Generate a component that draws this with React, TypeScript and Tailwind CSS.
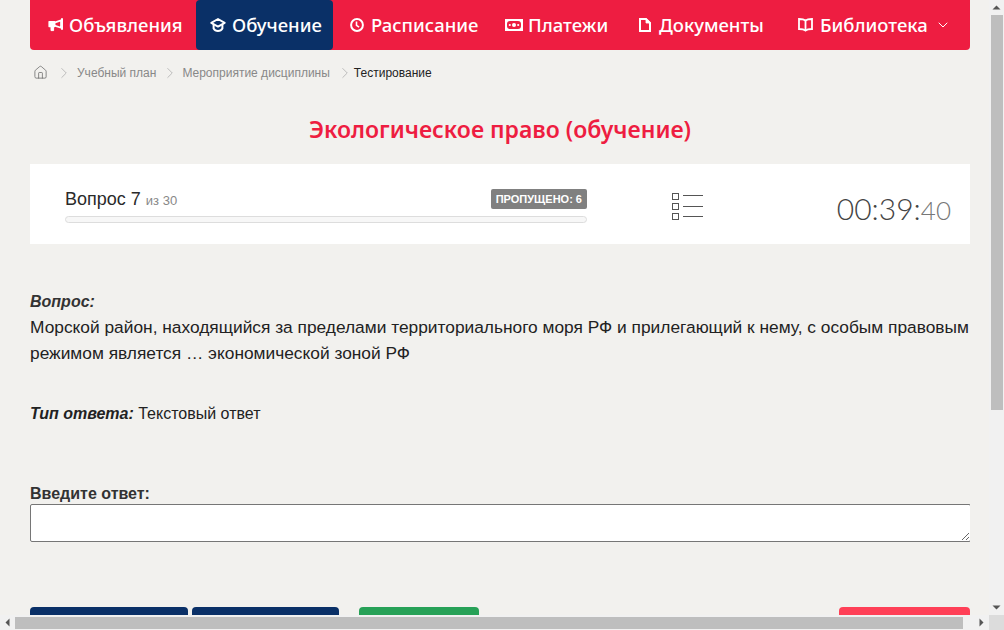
import { ChevronDown, ChevronRight, Home } from "lucide-react";

const navFont = "[font-family:'Noto_Sans',sans-serif]";

const MegaphoneIcon = () => (
  <svg width="15" height="14" viewBox="0 0 15 14" className="shrink-0" fill="none" stroke="#fff">
    <path d="M14 1v10" strokeWidth="2" strokeLinecap="round" />
    <path d="M13 2.400 6.500 4.600v3l6.500 2.200z" strokeWidth="1.700" strokeLinejoin="round" />
    <path d="M1 3.600h5.600v5H1z" fill="#fff" strokeWidth="1.200" strokeLinejoin="round" />
    <path d="M3 9v3.600h2.600V9" fill="#fff" strokeWidth="1" />
  </svg>
);

const CapIcon = ({ fill }: { fill: string }) => (
  <svg width="16" height="14" viewBox="0 0 16 14" className="shrink-0" fill="none" stroke="#fff">
    <path d="M3.600 6v4.600c1 1.800 2.700 2.400 4.400 2.400s3.400-.6 4.400-2.400V6" strokeWidth="2" />
    <path d="M8 1 14.700 4.800 8 8.600 1.300 4.800z" fill={fill} strokeWidth="1.900" strokeLinejoin="round" />
  </svg>
);

const ClockIcon = () => (
  <svg width="14" height="14" viewBox="0 0 14 14" className="shrink-0" fill="none" stroke="#fff">
    <circle cx="7" cy="7" r="5.900" strokeWidth="2" />
    <path d="M6.500 3.600v3.700l2.600 1.900" strokeWidth="1.600" />
  </svg>
);

const MoneyIcon = () => (
  <svg width="18" height="12" viewBox="0 0 18 12" className="shrink-0">
    <rect width="18" height="12" fill="#fff" />
    <rect x="2" y="2" width="14" height="8" rx="3" fill="#ee1d41" />
    <circle cx="9" cy="6" r="2" fill="#fff" />
    <circle cx="4.800" cy="6" r="1.100" fill="#fff" />
    <circle cx="13.200" cy="6" r="1.100" fill="#fff" />
  </svg>
);

const DocIcon = () => (
  <svg width="12" height="14" viewBox="0 0 12 14" className="shrink-0" fill="none" stroke="#fff">
    <path d="M1 1h6l4 4v8H1z" strokeWidth="2" />
    <path d="M7 0.500v4.500h4.500z" fill="#fff" strokeWidth="0.800" />
  </svg>
);

const BookIcon = () => (
  <svg width="15" height="14" viewBox="0 0 15 14" className="shrink-0" fill="none" stroke="#fff">
    <path d="M7.500 2.500C6 1.300 3.500 1 1 1v10c2.500 0 5 .3 6.500 1.500C9 11.300 11.500 11 14 11V1c-2.500 0-5 .3-6.500 1.500z" strokeWidth="1.800" />
    <path d="M7.500 2v11" strokeWidth="1.800" />
  </svg>
);

const navItems = [
  { label: "Объявления", icon: <MegaphoneIcon />, className: "w-[166px] pl-[18px] gap-[6px]" },
  { label: "Обучение", icon: <CapIcon fill="#0a3067" />, className: "w-[137px] pl-[14px] gap-[6px] bg-[#0a3067] rounded-[4px]" },
  { label: "Расписание", icon: <ClockIcon />, className: "w-[155px] pl-[17px] gap-[7px]" },
  { label: "Платежи", icon: <MoneyIcon />, className: "w-[133px] pl-[17px] gap-[5px]" },
  { label: "Документы", icon: <DocIcon />, className: "w-[160px] pl-[18px] gap-[8px]" },
];

const Arrow = ({ d }: { d: string }) => (
  <svg width="15" height="15" viewBox="0 0 15 15" className="shrink-0">
    <path d={d} fill="#555" />
  </svg>
);

export default function App() {
  return (
    <div className="h-[630px] w-[1004px] overflow-hidden flex flex-col bg-[#f2f1ee] [font-family:'Liberation_Sans',sans-serif] text-[#222]">
      <div className="flex h-[615px]">
        <main className="w-[989px] h-[615px] overflow-hidden pl-[30px] pr-[19px]">
          {/* nav */}
          <nav className={`flex h-[50px] items-stretch bg-[#ee1d41] rounded-b-[4px] text-white text-[18.5px] font-medium ${navFont}`}>
            {navItems.map((item) => (
              <div key={item.label} className={`flex items-center ${item.className}`}>
                {item.icon}
                <span>{item.label}</span>
              </div>
            ))}
            <div className="flex items-center gap-[7px] pl-[17px]">
              <BookIcon />
              <span>Библиотека</span>
              <ChevronDown size={16} strokeWidth={1.5} />
            </div>
          </nav>

          {/* breadcrumbs */}
          <div className="flex items-center h-[45px] text-[12px] text-[#888] pl-[3px]">
            <Home size={15} strokeWidth={1.2} className="text-[#666]" />
            <ChevronRight size={18} strokeWidth={1} className="ml-[7px] mr-[4px] text-[#aaa]" />
            <span>Учебный план</span>
            <ChevronRight size={18} strokeWidth={1} className="ml-[5px] mr-[3px] text-[#aaa]" />
            <span>Мероприятие дисциплины</span>
            <ChevronRight size={18} strokeWidth={1} className="ml-[6px] text-[#aaa]" />
            <span className="text-[#222]">Тестирование</span>
          </div>

          {/* title */}
          <h1 className={`text-center text-[#ee1d41] text-[23px] font-semibold leading-[30px] mt-[19px] ${navFont}`}>
            Экологическое право (обучение)
          </h1>

          {/* progress panel */}
          <section className="flex bg-white h-[80px] mt-[20px] pl-[35px]">
            <div className="w-[522px] pt-[25px]">
              <div className="flex items-center justify-between h-[20px]">
                <div className="text-[18px] text-[#2a2a2a]">
                  Вопрос 7 <span className="text-[13px] text-[#888]">из 30</span>
                </div>
                <span className="flex items-center h-[20px] px-[5px] bg-[#808080] rounded-[2px] text-white text-[11px] font-bold">
                  ПРОПУЩЕНО: 6
                </span>
              </div>
              <div className="h-[7px] mt-[7px] bg-[#f7f7f7] border border-[#ddd] rounded-full" />
            </div>
            <svg width="32" height="27" viewBox="0 0 32 27" className="ml-[85px] mt-[29px] shrink-0" fill="none" stroke="#555">
              <rect x="0.500" y="0.500" width="6" height="6" />
              <rect x="0.500" y="10.500" width="6" height="6" />
              <rect x="0.500" y="20.500" width="6" height="6" />
              <path d="M11 2.500h20M11 13.500h20M11 23.500h20" />
            </svg>
            <div className="ml-auto pr-[19px] pt-[24px] [font-family:Lato,sans-serif] font-light text-[#444] text-[30px] leading-[40px] whitespace-nowrap">
              00:39:<span className="text-[26px] text-[#777]">40</span>
            </div>
          </section>

          {/* question */}
          <p className="mt-[48px] text-[16px] font-bold italic leading-[20px] text-[#333]">Вопрос:</p>
          <p className="text-[17.33px] leading-[26px] mt-[2px]">
            Морской район, находящийся за пределами территориального моря РФ и прилегающий к нему, с особым правовым режимом является … экономической зоной РФ
          </p>
          <p className="mt-[38px] text-[16px] leading-[20px]">
            <b className="italic">Тип ответа:</b> Текстовый ответ
          </p>

          {/* answer */}
          <p className="mt-[60px] text-[16px] font-bold leading-[20px] text-[#333]">Введите ответ:</p>
          <div className="overflow-hidden">
            <textarea className="block w-[941px] h-[38px] bg-white border border-[#767676] rounded-[2px] outline-none" />
          </div>

          {/* buttons, cut by the window */}
          <div className="flex mt-[65px] h-[40px]">
            <div className="w-[158px] bg-[#0a3067] rounded-[4px]" />
            <div className="w-[147px] ml-[4px] bg-[#0a3067] rounded-[4px]" />
            <div className="w-[120px] ml-[20px] bg-[#27a157] rounded-[4px]" />
            <div className="w-[131px] ml-auto bg-[#ff4057] rounded-[4px]" />
          </div>
        </main>

        {/* vertical scrollbar */}
        <div className="w-[15px] h-[615px] bg-[#f1f1f1] flex flex-col items-center">
          <Arrow d="M3.500 9.500 7.500 5.500 11.500 9.500z" />
          <div className="w-[12px] h-[395px] bg-[#bebebe] ml-[1px]" />
          <div className="mt-auto">
            <Arrow d="M3.500 5.500h8l-4 4z" />
          </div>
        </div>
      </div>

      {/* horizontal scrollbar */}
      <div className="flex items-center h-[15px] bg-[#f1f1f1]">
        <Arrow d="M9.500 3.500v8l-4-4z" />
        <div className="w-[948px] h-[12px] bg-[#bebebe] mt-[1px]" />
        <div className="ml-auto">
          <Arrow d="M5.500 3.500v8l4-4z" />
        </div>
        <div className="w-[15px] h-[15px] bg-[#dcdcdc]" />
      </div>
    </div>
  );
}
